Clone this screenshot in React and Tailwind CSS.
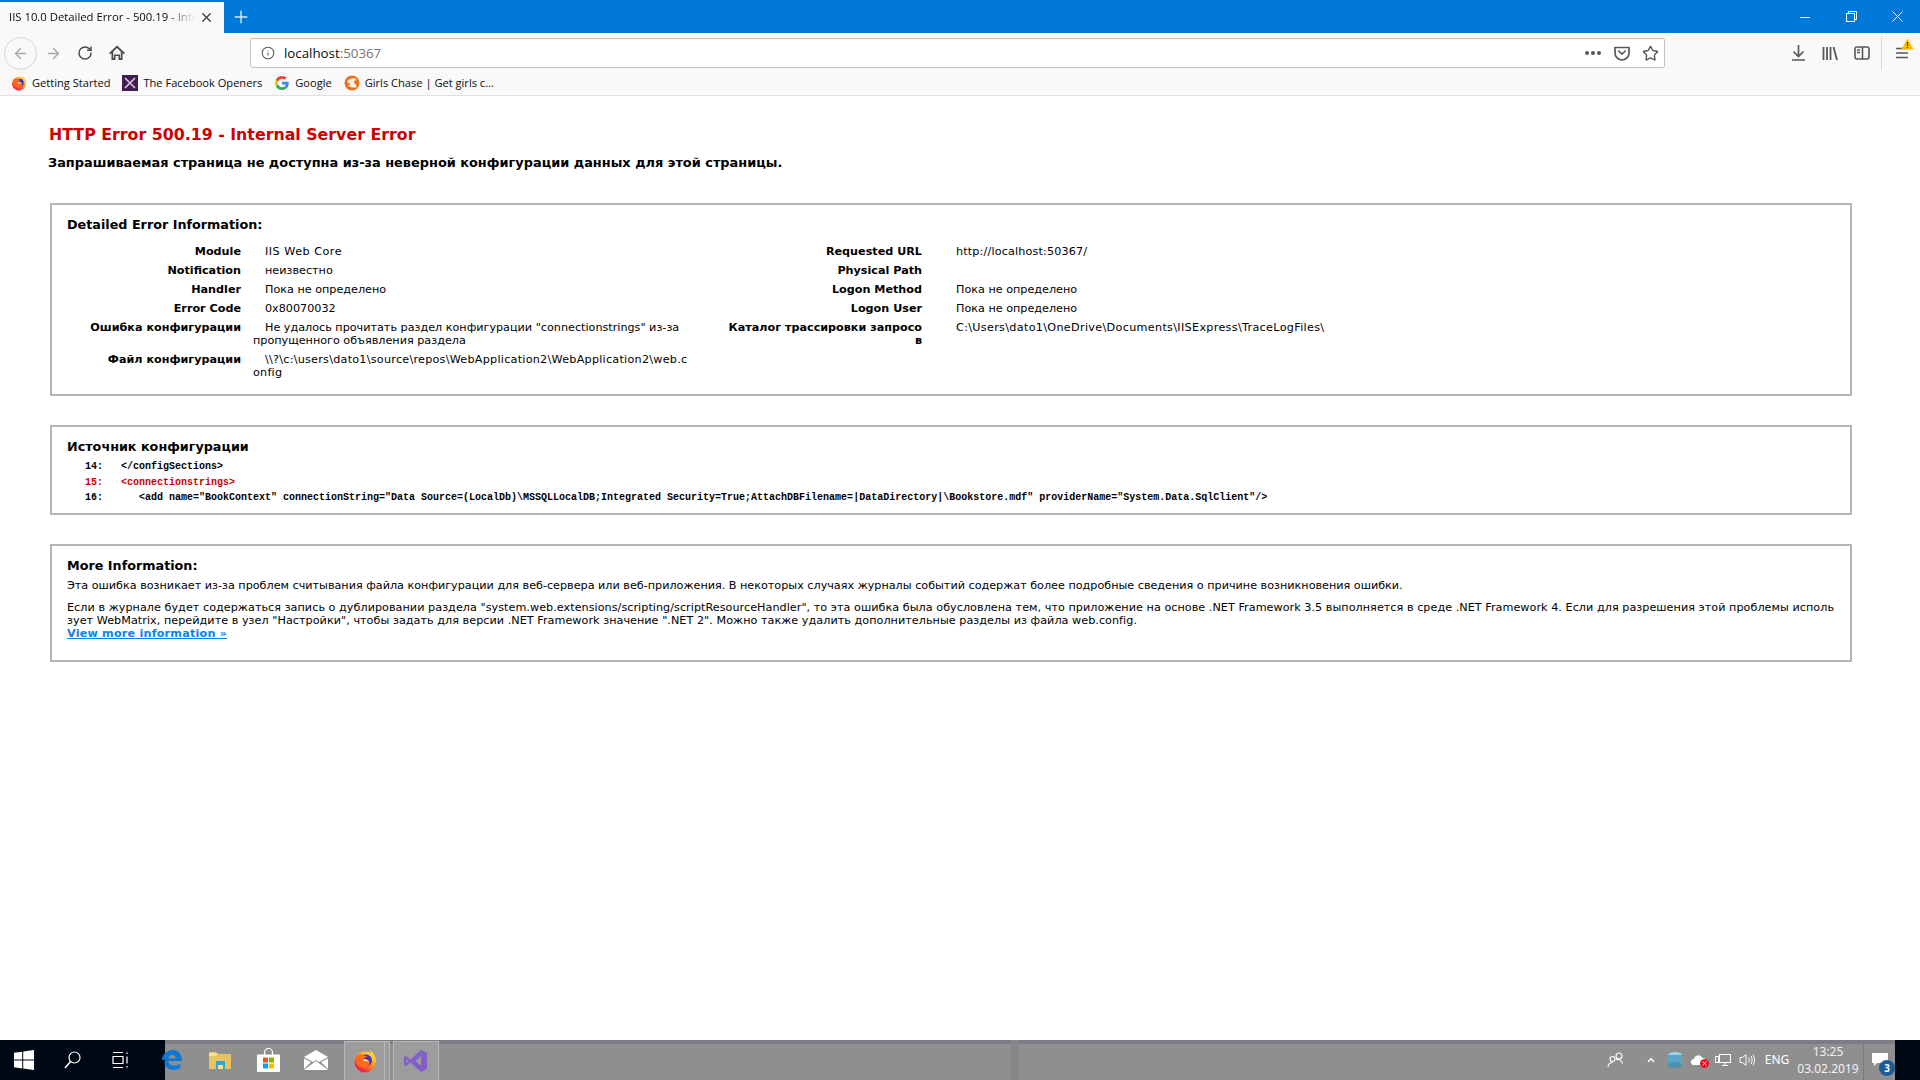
// IIS 500.19 error page inside a Firefox window on the Windows 10 desktop.
import { ArrowLeft, ArrowRight, RotateCw, Info, X, Plus, ChevronUp, Star } from 'lucide-react';

const leftRows = [
  ['Module', 'IIS Web Core', 'tracking-[0.5px]'],
  ['Notification', 'неизвестно'],
  ['Handler', 'Пока не определено'],
  ['Error Code', '0x80070032'],
  ['Ошибка конфигурации', 'Не удалось прочитать раздел конфигурации "connectionstrings" из-за пропущенного объявления раздела'],
  ['Файл конфигурации', '\\\\?\\c:\\users\\dato1\\source\\repos\\WebApplication2\\WebApplication2\\web.config', 'tracking-[0.25px]'],
];

const rightRows = [
  ['Requested URL', 'http://localhost:50367/', 'tracking-[0.16px]'],
  ['Physical Path', ''],
  ['Logon Method', 'Пока не определено'],
  ['Logon User', 'Пока не определено'],
  ['Каталог трассировки запросов', 'C:\\Users\\dato1\\OneDrive\\Documents\\IISExpress\\TraceLogFiles\\', 'tracking-[0.32px]'],
];

function FirefoxLogo({ size = 16 }) {
  return (
    <svg width={size} height={size} viewBox="0 0 24 24">
      <defs>
        <linearGradient id="ffx" x1="0.85" y1="0" x2="0.15" y2="1">
          <stop offset="0" stopColor="#ffe14a" />
          <stop offset="0.4" stopColor="#ff9a1f" />
          <stop offset="0.8" stopColor="#f0303f" />
          <stop offset="1" stopColor="#e0206a" />
        </linearGradient>
      </defs>
      <circle cx="12" cy="13" r="10.500" fill="url(#ffx)" />
      <path d="M16.500 1c4 2.500 7 7 6 12.500-1-3.500-3-5.500-5-6.500.5-2 .2-4.500-1-6z" fill="#ffd22e" />
      <circle cx="13" cy="11.500" r="6" fill="#4a35b0" />
      <path d="M4 6.500c2-1.500 4-1.500 5.500-.5 1.500.8 3.500.8 5 1.500-1.500.5-3.500 1-4 2.500 2.500-.2 5.500.8 6 3.500.4 3-2.500 5.500-5.500 5.500-4.500 0-8-3.500-8-7 0-2.500.2-3.500 1-5.500z" fill="#ff6a1f" />
      <path d="M10.500 10c2-.2 5 .8 6 3.500-1.500-1.200-3.500-1.500-6-1.200z" fill="#ffd9a0" />
    </svg>
  );
}

function GoogleLogo() {
  return (
    <svg width="14" height="14" viewBox="0 0 48 48">
      <path fill="#ea4335" d="M24 9.500c3.500 0 6.700 1.300 9.100 3.500l6.800-6.800C35.800 2.400 30.200 0 24 0 14.600 0 6.500 5.400 2.600 13.200l7.900 6.200C12.400 13.600 17.700 9.500 24 9.500z" />
      <path fill="#4285f4" d="M46.900 24.500c0-1.600-.1-3.100-.4-4.500H24v9h12.900c-.6 3-2.200 5.500-4.700 7.200l7.700 6c4.500-4.200 7-10.300 7-17.700z" />
      <path fill="#fbbc05" d="M10.500 28.600C10 27.200 9.800 25.600 9.800 24s.3-3.200.7-4.600l-7.900-6.200C.9 16.500 0 20.100 0 24s.9 7.500 2.600 10.800z" />
      <path fill="#34a853" d="M24 48c6.500 0 11.900-2.100 15.900-5.800l-7.700-6c-2.200 1.400-4.900 2.300-8.200 2.300-6.300 0-11.600-4.200-13.500-9.900l-7.900 6.200C6.500 42.600 14.600 48 24 48z" />
    </svg>
  );
}

function Bookmark({ icon, label }) {
  return (
    <div className="flex items-center gap-[5px]">
      <span className="flex h-4 w-4 items-center justify-center">{icon}</span>
      <span className="whitespace-nowrap">{label}</span>
    </div>
  );
}

function Slot({ w, children, className = '' }) {
  return <div className={`flex shrink-0 items-center justify-center ${className}`} style={{ width: w }}>{children}</div>;
}

function InfoTable({ rows, labelClass, valueClass, gapClass }) {
  return (
    <div className="flex flex-col gap-[6px]">
      {rows.map(([label, value, extra = '']) => (
        <div key={label} className={`flex ${gapClass}`}>
          <div className={`shrink-0 text-right font-bold break-all ${labelClass}`}>{label}</div>
          <div className={`break-all ${valueClass} ${extra}`}>{value}</div>
        </div>
      ))}
    </div>
  );
}

function Section({ title, className = '', children }) {
  return (
    <section className={`border-2 border-[#b4b4b4] px-[15px] ${className}`}>
      <h4 className="text-[12.750px] leading-[16px] font-bold text-black">{title}</h4>
      {children}
    </section>
  );
}

function Page() {
  return (
    <main className="flex-1 min-h-0 overflow-hidden bg-white pl-[48px] pr-[68px] text-[11.200px] leading-[13px] text-black font-['DejaVu_Sans','Noto_Sans',sans-serif]">
      <h1 className="pl-px pt-[29px] text-[15.800px] leading-[20px] font-bold text-[#cc0000]">HTTP Error 500.19 - Internal Server Error</h1>
      <h2 className="pt-[10px] text-[12.900px] leading-[16px] font-bold">Запрашиваемая страница не доступна из-за неверной конфигурации данных для этой страницы.</h2>
      <div className="ml-[2px] mt-[32px] flex flex-col gap-[29px]">
        <Section title="Detailed Error Information:" className="h-[193px] pt-[12px]">
          <div className="mt-[12px] flex">
            <div className="w-[658px] shrink-0">
              <InfoTable rows={leftRows} gapClass="gap-[12px]" labelClass="w-[174px]" valueClass="w-[436px] indent-[12px]" />
            </div>
            <InfoTable rows={rightRows} gapClass="gap-[34px]" labelClass="w-[197px]" valueClass="w-[600px]" />
          </div>
        </Section>

        <Section title="Источник конфигурации" className="h-[90px] pt-[12px]">
          <div className="mt-[5px] flex flex-col gap-[2.500px] whitespace-pre pl-[18px] text-[10px] leading-[13px] font-bold font-['Liberation_Mono',monospace]">
            <div>{'14:   </configSections>'}</div>
            <div className="text-[#cc0000]">{'15:   <connectionstrings>'}</div>
            <div>{'16:      <add name="BookContext" connectionString="Data Source=(LocalDb)\\MSSQLLocalDB;Integrated Security=True;AttachDBFilename=|DataDirectory|\\Bookstore.mdf" providerName="System.Data.SqlClient"/>'}</div>
          </div>
        </Section>

        <Section title="More Information:" className="h-[118px] pt-[12px]">
          <p className="mt-[5px]">Эта ошибка возникает из-за проблем считывания файла конфигурации для веб-сервера или веб-приложения. В некоторых случаях журналы событий содержат более подробные сведения о причине возникновения ошибки.</p>
          <p className="mt-[9px] break-all tracking-[0.04px]">Если в журнале будет содержаться запись о дублировании раздела "system.web.extensions/scripting/scriptResourceHandler", то эта ошибка была обусловлена тем, что приложение на основе .NET Framework 3.5 выполняется в среде .NET Framework 4. Если для разрешения этой проблемы использует WebMatrix, перейдите в узел "Настройки", чтобы задать для версии .NET Framework значение ".NET 2". Можно также удалить дополнительные разделы из файла web.config.</p>
          <a className="block font-bold tracking-[0.2px] text-[#0f7fe8] underline">View more information »</a>
        </Section>
      </div>
    </main>
  );
}

function Browser() {
  return (
    <>
      {/* tab strip */}
      <div className="flex h-[33px] shrink-0 bg-[#0078d7] text-white">
        <div className="mt-[2px] flex w-[224px] shrink-0 items-center bg-[#f9f9fa] pl-[9px] text-[11.300px] text-[#0c0c0d]">
          <span className="w-[186px] overflow-hidden whitespace-nowrap [mask-image:linear-gradient(to_right,black_85%,transparent)]">IIS 10.0 Detailed Error - 500.19 - Internal Server Error</span>
          <X size={15} strokeWidth={2} className="ml-[4px] text-[#3a3a3c]" />
        </div>
        <Slot w={34}><Plus size={20} strokeWidth={1.700} className="text-[#d5e8f8]" /></Slot>
        <div className="flex-1" />
        <Slot w={46}>
          <svg width="10" height="10" viewBox="0 0 10 10" stroke="white"><path d="M0 5.500h10" /></svg>
        </Slot>
        <Slot w={46}>
          <svg width="11" height="11" viewBox="0 0 11 11" fill="none" stroke="white"><path d="M.5 2.500h8v8h-8zM2.500 2.500v-2h8v8h-2" /></svg>
        </Slot>
        <Slot w={46}>
          <svg width="11" height="11" viewBox="0 0 11 11" stroke="white"><path d="M.5.500l10 10M10.500.500l-10 10" /></svg>
        </Slot>
      </div>

      {/* navigation toolbar */}
      <div className="flex h-[40px] shrink-0 items-center bg-[#f9f9fa] pl-[3px] text-[#4a4a4f]">
        <Slot w={34}>
          <div className="flex h-[33px] w-[33px] items-center justify-center rounded-full border border-[#d4d4d6] text-[#a9a9ab]"><ArrowLeft size={17} strokeWidth={2} /></div>
        </Slot>
        <Slot w={32}><ArrowRight size={17} strokeWidth={2} className="text-[#a9a9ab]" /></Slot>
        <Slot w={32}><RotateCw size={16} strokeWidth={2.200} /></Slot>
        <Slot w={32}>
          <svg width="16" height="16" viewBox="0 0 16 16" fill="currentColor"><path d="M8 .5 0 8l1.300 1.300L2.500 8.200V15h4v-4h3v4h4V8.200l1.200 1.100L16 8zM11.800 13.300h-.7V9.500H4.900v3.800h-.7V6.700L8 3l3.800 3.700z" /></svg>
        </Slot>
        <div className="w-[117px] flex-none" />
        <div className="flex h-[30px] w-[1415px] shrink-0 items-center rounded-[2px] border border-[#c4c4c6] bg-white text-[13.300px]">
          <Slot w={33}><Info size={14} strokeWidth={1.800} className="text-[#58585b]" /></Slot>
          <span className="pt-px text-[#0c0c0d]">localhost<span className="text-[#737373]">:50367</span></span>
          <div className="flex-1" />
          <div className="mr-[5px] flex gap-[2px]"><i className="h-[4px] w-[4px] rounded-full bg-[#58585b]" /><i className="h-[4px] w-[4px] rounded-full bg-[#58585b]" /><i className="h-[4px] w-[4px] rounded-full bg-[#58585b]" /></div>
          <Slot w={32}>
            <svg width="16" height="16" viewBox="0 0 16 16" fill="none" stroke="#58585b" strokeWidth="1.700"><path d="M1 2.500h14v5.500a7 7 0 0 1-14 0z" strokeLinejoin="round" /><path d="m4.800 6 3.200 3 3.200-3" strokeLinecap="round" /></svg>
          </Slot>
          <Slot w={24}><Star size={17} strokeWidth={2} className="text-[#58585b]" /></Slot>
          <div className="w-[2px]" />
        </div>
        <div className="w-[117px] shrink-0" />
        <Slot w={32}>
          <svg width="15" height="16" viewBox="0 0 15 16" fill="none" stroke="#58585b" strokeWidth="1.700"><path d="M7.500 0v11M2.500 6.500l5 5 5-5M1 15h13" /></svg>
        </Slot>
        <Slot w={32}>
          <svg width="16" height="15" viewBox="0 0 16 15" fill="none" stroke="#58585b" strokeWidth="1.800"><path d="M1.500 1v13M5 1v13M8.500 1v13M11.500 1l3.500 13" /></svg>
        </Slot>
        <Slot w={32}>
          <svg width="16" height="14" viewBox="0 0 16 14" fill="none" stroke="#58585b" strokeWidth="1.600"><rect x="1" y="1" width="14" height="12" rx="2" /><path d="M8.500 1v12M3 4h3M3 6.500h3" /></svg>
        </Slot>
        <div className="ml-[3px] h-[34px] w-px bg-[#d8d8da]" />
        <div className="relative ml-[13px]">
          <svg width="14" height="12" viewBox="0 0 14 12" fill="none" stroke="#58585b" strokeWidth="1.700"><path d="M1 1.500h12M1 6h12M1 10.500h12" /></svg>
          <svg className="absolute -right-[5px] -top-[9px]" width="13" height="12" viewBox="0 0 13 12"><path d="M6.500.500 12.800 11.500H.2z" fill="#ffbf00" /><path d="M6.500 4v4M6.500 9v1.200" stroke="#5a4300" strokeWidth="1.300" /></svg>
        </div>
      </div>

      {/* bookmarks */}
      <div className="flex h-[23px] shrink-0 items-center gap-[12px] border-b border-[#e0e0e2] bg-[#f9f9fa] pb-[2px] pl-[11px] text-[11.100px] text-[#0c0c0d]">
        <Bookmark icon={<FirefoxLogo />} label="Getting Started" />
        <Bookmark
          label="The Facebook Openers"
          icon={<svg width="16" height="16" viewBox="0 0 16 16"><rect width="16" height="16" fill="#3f1d4e" /><path d="M3 3l10 10M13 3 3 13" stroke="#d8c8dc" strokeWidth="1.600" /></svg>}
        />
        <Bookmark icon={<GoogleLogo />} label="Google" />
        <Bookmark
          label="Girls Chase | Get girls c..."
          icon={<svg width="16" height="16" viewBox="0 0 16 16"><circle cx="8" cy="8" r="7.500" fill="#e8711c" /><path d="M3 6c3-3 7-4 10-1-2 0-3 1-3 2s2 2 3 5c-3 1-7 1-9-2 1 0 2 0 3-1-2 0-3-1-4-3z" fill="#fbeee2" /></svg>}
        />
      </div>
    </>
  );
}

function Taskbar() {
  const running = 'h-full border-x border-t border-[#b8b8b8] bg-[#9c9c9c]';
  return (
    <footer className="flex h-[40px] shrink-0 bg-[#8f8f8f] text-white font-['Noto_Sans',sans-serif]">
      <div className="flex w-[165px] shrink-0 items-center bg-[#000814]">
        <Slot w={48}>
          <svg width="20" height="20" viewBox="0 0 20 20" fill="white"><path d="M0 2.800 8.200 1.700v7.900H0zM9.200 1.500 20 0v9.600H9.200zM0 10.500h8.200v7.900L0 17.200zM9.200 10.500H20V20L9.200 18.500z" /></svg>
        </Slot>
        <Slot w={48}>
          <svg width="17" height="18" viewBox="0 0 17 18" fill="none" stroke="white" strokeWidth="1.200"><circle cx="10.500" cy="6.500" r="5.500" /><path d="M6.500 10.500 1 17" strokeWidth="1.500" /></svg>
        </Slot>
        <Slot w={48}>
          <svg width="17" height="16" viewBox="0 0 17 16" fill="none" stroke="white" strokeWidth="1.200"><path d="M1 .5h10M1 15.500h10M1 4.500h10v7H1zM15 .5V2M15 4.500v7M15 14v1.500" /></svg>
        </Slot>
      </div>
      <div className="relative flex flex-1 items-center">
        {/* shade along the top edge and the window sliver that shows through */}
        <div className="absolute inset-x-0 top-0 h-[4px] bg-[#7c7c84]" />
        <div className="absolute bottom-0 left-[846px] top-0 w-[8px] bg-[#85858a]" />
        <Slot w={48} className="relative -ml-[17px]">
          <svg width="22" height="22" viewBox="0 0 24 24"><path fill="#0f78d4" d="M1 11C2 5 7 1 13 1c6 0 10 5 10 12H8c.5 5 7 7 13 3v5c-6 3-12 2-15-1-2-2-3-6-1-9-2 1-3 2-4 0zm7-1h8c0-4-7-5-8 0z" /></svg>
        </Slot>
        <Slot w={48} className="relative">
          <svg width="22" height="20" viewBox="0 0 22 20"><path fill="#e8c360" d="M0 2.500h7l2 1.500h13v15H0z" /><path fill="#fbe08a" d="M0 2.500h7L9 4 7 6H0z" /><rect x="7" y="11" width="9" height="8" fill="#2aa7e0" /><rect x="9" y="15" width="5" height="4" fill="#fbe08a" /></svg>
        </Slot>
        <Slot w={48} className="relative">
          <svg width="23" height="24" viewBox="0 0 23 24"><path d="M7.500 7V4.500a4 4 0 0 1 8 0V7" fill="none" stroke="white" strokeWidth="1.200" /><rect y="6.500" width="23" height="17.500" rx="1" fill="white" /><rect x="6" y="9.500" width="5" height="5" fill="#f25022" /><rect x="12" y="9.500" width="5" height="5" fill="#7fba00" /><rect x="6" y="15.500" width="5" height="5" fill="#00a4ef" /><rect x="12" y="15.500" width="5" height="5" fill="#ffb900" /></svg>
        </Slot>
        <Slot w={48} className="relative">
          <svg width="24" height="20" viewBox="0 0 24 20" fill="white"><path d="M12 0 24 7l-9 5-3-2-3 2L0 7z" /><path d="M0 8.500 7 12 0 19zM0 20l12-9 12 9zM24 8.500V19l-7-7z" /></svg>
        </Slot>
        <div className="relative ml-[4px] flex h-[39px] items-center self-end">
          <Slot w={41} className={running}><FirefoxLogo size={24} /></Slot>
          <div className={`w-[5px] border-l-0 ${running}`} />
          <div className="w-[3px]" />
          <Slot w={46} className={running}>
            <svg width="24" height="24" viewBox="0 0 24 24" fill="#8260c8"><path d="M17 1 23 4v16l-6 3L6.500 13.500 2 17l-2-1V8l2-1 4.500 3.500zM17 7l-5.500 5 5.500 4.500zM2.500 10v4l2-2z" /></svg>
          </Slot>
        </div>
        <div className="flex-1" />
        <div className="relative flex h-full items-center">
          <Slot w={26} className="mr-[9px]">
            <svg width="18" height="16" viewBox="0 0 18 16" fill="none" stroke="white" strokeWidth="1.100"><circle cx="12" cy="4" r="3" /><circle cx="5.500" cy="7" r="2.500" /><path d="M1 15c.3-3 2-4.500 4.500-4.500M9 7.500c3-.6 6 1 6.500 4" /></svg>
          </Slot>
          <Slot w={26}><ChevronUp size={10} strokeWidth={4} className="text-white" /></Slot>
          <Slot w={22}>
            <svg width="14" height="16" viewBox="0 0 14 16"><ellipse cx="7" cy="3" rx="7" ry="3" fill="#9ed4ea" /><rect y="3" width="14" height="10" fill="#5aa6c8" /><ellipse cx="7" cy="13" rx="7" ry="3" fill="#4d90b0" /></svg>
          </Slot>
          <Slot w={24} className="relative">
            <svg width="15" height="10" viewBox="0 0 15 10" fill="white"><path d="M3 10a3 3 0 0 1 0-6 4.500 4.500 0 0 1 8.500-1A3.500 3.500 0 0 1 12 10z" /></svg>
            <span className="absolute bottom-[-3px] right-[1px] flex h-[9px] w-[9px] items-center justify-center rounded-full bg-[#e81123]"><X size={7} strokeWidth={3} /></span>
          </Slot>
          <Slot w={26}>
            <svg width="16" height="14" viewBox="0 0 16 14" fill="none" stroke="white" strokeWidth="1"><rect x="4.500" y="1.500" width="11" height="8" /><path d="M.5 3.500h3v6h-3zM10 9.500v3M7 12.500h6" /></svg>
          </Slot>
          <Slot w={22}>
            <svg width="16" height="14" viewBox="0 0 16 14" fill="none" stroke="white" strokeWidth="1"><path d="M1 4.500h2.500L7 1.500v11l-3.500-3H1zM9.500 4.500c1 1.500 1 3.500 0 5M12 3c1.500 2.500 1.500 5.500 0 8M14 1.500c2 3 2 8 0 11" /></svg>
          </Slot>
          <div className="w-[38px] text-center text-[12px]">ENG</div>
          <div className="w-[64px] text-center text-[12px] leading-[17px] text-[#f1f1f1]">
            <div className="-mt-[1px]">13:25</div>
            <div>03.02.2019</div>
          </div>
          <div className="ml-[3px] h-full w-px bg-[#7a7a7a]" />
          <Slot w={31} className="relative h-full">
            <svg className="-mt-[1px]" width="16" height="14" viewBox="0 0 16 14" fill="white"><path d="M0 0h16v10H5l-3 3v-3H0z" /></svg>
            <span className="absolute right-0 top-[20px] flex h-[16px] w-[16px] items-center justify-center rounded-full bg-[#1d5c96] text-[10px] leading-none font-bold">3</span>
          </Slot>
        </div>
      </div>
      <div className="w-[25px] shrink-0 bg-[#000814]" />
    </footer>
  );
}

export default function App() {
  return (
    <div className="flex h-screen w-screen flex-col overflow-hidden font-['Open_Sans',sans-serif]">
      <Browser />
      <Page />
      <Taskbar />
    </div>
  );
}
